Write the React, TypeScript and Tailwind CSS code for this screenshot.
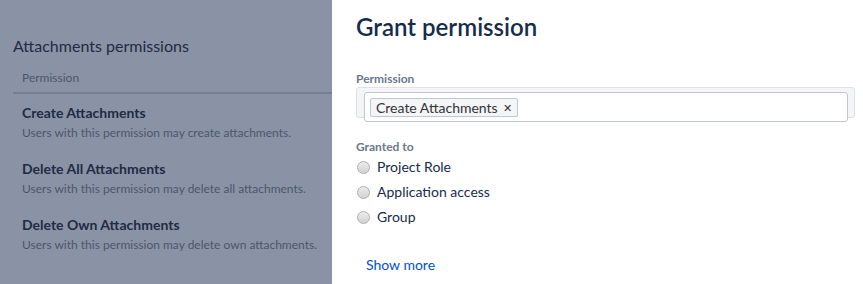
const PERMS = [
  { name: "Create Attachments", desc: "Users with this permission may create attachments." },
  { name: "Delete All Attachments", desc: "Users with this permission may delete all attachments." },
  { name: "Delete Own Attachments", desc: "Users with this permission may delete own attachments." },
];

const GRANTEES = ["Project Role", "Application access", "Group"];

function Radio() {
  return (
    <span className="block h-[13px] w-[13px] shrink-0 rounded-full border border-[#aeaeae] bg-linear-to-b from-[#ececec] to-[#d2d2d2]" />
  );
}

export default function App() {
  return (
    <div className="flex h-[284px] w-[863px] overflow-hidden font-['Lato',sans-serif] text-[#172b4d]">
      {/* página de fondo, oscurecida por el diálogo */}
      <div className="w-[332px] shrink-0 bg-[#8a93a5] pt-[36px] pl-[13px]">
        <h2 className="text-[16px] leading-[20px] text-[#1f2a44]">Attachments permissions</h2>
        <div className="mt-[14px] border-b-2 border-[#767f92] pb-[6px] pl-[9px] text-[12px] leading-[16px] text-[#4c566c]">
          Permission
        </div>
        <ul className="pt-[9px] pl-[9px]">
          {PERMS.map((p) => (
            <li key={p.name} className="h-[56px] whitespace-nowrap">
              <p className="text-[14px] leading-[20px] font-bold text-[#1f2a44]">{p.name}</p>
              <p className="text-[12px] leading-[20px] text-[#4c566c]">{p.desc}</p>
            </li>
          ))}
        </ul>
      </div>

      {/* diálogo */}
      <div className="flex-1 bg-white pt-[13px] pl-[24px]">
        <h2 className="text-[24px] leading-[28px] font-semibold text-[#172b4d]">Grant permission</h2>

        <label className="mt-[30px] block text-[12px] leading-[16px] font-bold text-[#6b778c]">Permission</label>
        <div className="h-[31px] w-[499px] rounded-[3px] border border-[#dfe1e6] bg-[#f4f5f7] pt-[4px] pl-[7px]">
          <div className="flex h-[30px] w-[484px] items-center rounded-[3px] border border-[#c1c7d0] bg-white pl-[5px]">
            <span className="flex h-[19px] items-center gap-[5px] rounded-[2px] border border-[#c1c7d0] bg-[#f4f5f7] px-[5px] text-[14px] leading-[17px] text-[#333]">
              Create Attachments
              <span className="text-[11px] leading-none text-[#333]">✕</span>
            </span>
          </div>
        </div>

        <label className="mt-[21px] block text-[12px] leading-[16px] font-bold text-[#6b778c]">Granted to</label>
        <ul className="mt-[2px] space-y-[5px]">
          {GRANTEES.map((g) => (
            <li key={g} className="flex h-[20px] items-center gap-[7px] pl-[1px] text-[14px] leading-[20px] text-[#172b4d]">
              <Radio />
              {g}
            </li>
          ))}
        </ul>

        <a className="mt-[28px] ml-[10px] block text-[14px] leading-[20px] text-[#0052cc]">Show more</a>
      </div>
    </div>
  );
}
